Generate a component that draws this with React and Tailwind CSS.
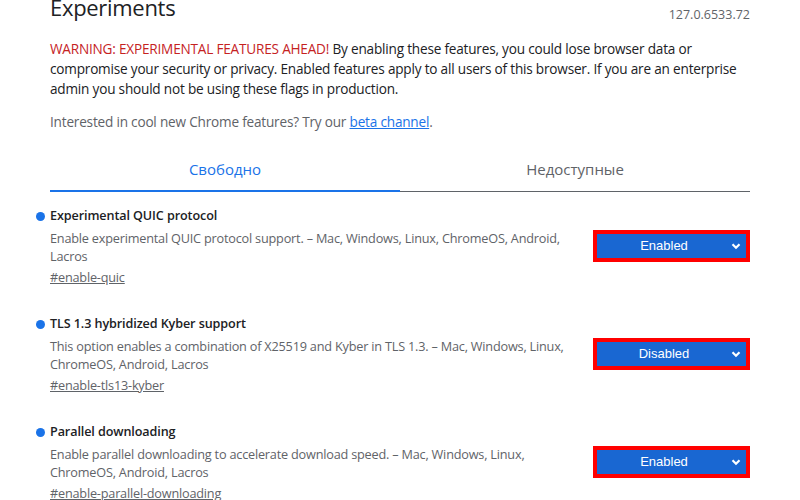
import React from "react";

const experiments = [
  {
    title: "Experimental QUIC protocol",
    desc: "Enable experimental QUIC protocol support. – Mac, Windows, Linux, ChromeOS, Android, Lacros",
    tag: "#enable-quic",
    value: "Enabled",
  },
  {
    title: "TLS 1.3 hybridized Kyber support",
    desc: "This option enables a combination of X25519 and Kyber in TLS 1.3. – Mac, Windows, Linux, ChromeOS, Android, Lacros",
    tag: "#enable-tls13-kyber",
    value: "Disabled",
  },
  {
    title: "Parallel downloading",
    desc: "Enable parallel downloading to accelerate download speed. – Mac, Windows, Linux, ChromeOS, Android, Lacros",
    tag: "#enable-parallel-downloading",
    value: "Enabled",
  },
];

const Chevron = () => (
  <svg width="10" height="10" viewBox="0 0 10 10" className="absolute right-[5px] top-1/2 -translate-y-1/2">
    <path d="M1.5 3.2 L5 6.7 L8.5 3.2" fill="none" stroke="white" strokeWidth="2.2" />
  </svg>
);

const Experiment = ({ item }) => (
  <div className="flex justify-between h-[108px]">
    <div className="relative w-[520px]">
      <span className="absolute -left-[14px] top-[5px] w-[9px] h-[9px] rounded-full bg-[#1a73e8]" />
      <h2 className="text-[12.6px] leading-[18px] font-semibold tracking-[-0.1px] text-[#202124]">{item.title}</h2>
      <p className="mt-[4px] text-[12.7px] leading-[18px] tracking-[-0.2px] text-[#5f6368]">{item.desc}</p>
      <a className="block mt-[3px] text-[12.7px] leading-[18px] tracking-[-0.2px] text-[#5f6368] underline">{item.tag}</a>
    </div>
    <div className="mt-[23px] h-[32px] w-[157px] border-4 border-[#ff0000] bg-[#1967d2] relative">
      <div className="h-full flex items-center justify-center pr-[15px] text-white text-[13px] font-['Liberation_Sans',Arial,sans-serif]">
        {item.value}
      </div>
      <Chevron />
    </div>
  </div>
);

export default function App() {
  return (
    <div className="h-[500px] overflow-hidden bg-white font-['Open_Sans','Noto_Sans',sans-serif]">
      <div className="w-[700px] mx-auto">
        <div className="flex justify-between items-start -mt-[9px]">
          <h1 className="text-[22px] leading-[32px] tracking-[-0.3px] text-[#202124]">Experiments</h1>
          <span className="mt-[15px] text-[12.5px] text-[#5f6368]">127.0.6533.72</span>
        </div>
        <p className="mt-[14px] text-[13.6px] leading-[20px] tracking-[-0.2px] text-[#202124]">
          <span className="text-[#c5221f]">WARNING: EXPERIMENTAL FEATURES AHEAD!</span> By enabling these features, you could lose browser data or compromise your security or privacy. Enabled features apply to all users of this browser. If you are an enterprise admin you should not be using these flags in production.
        </p>
        <p className="mt-[13px] text-[13.6px] leading-[20px] tracking-[-0.2px] text-[#5f6368]">
          Interested in cool new Chrome features? Try our <a className="text-[#1a73e8] underline">beta channel</a>.
        </p>
        <div className="mt-[17px] flex">
          <div className="flex-1 h-[43px] flex items-center justify-center pb-[1px] text-[15px] text-[#1a73e8] border-b-2 border-[#1a73e8]">
            Свободно
          </div>
          <div className="flex-1 h-[43px] flex items-center justify-center pb-[1px] text-[15px] text-[#5f6368] border-b border-[#5f6368]">
            Недоступные
          </div>
        </div>
        <div className="mt-[15px]">
          {experiments.map((e) => (
            <Experiment key={e.tag} item={e} />
          ))}
        </div>
      </div>
    </div>
  );
}
